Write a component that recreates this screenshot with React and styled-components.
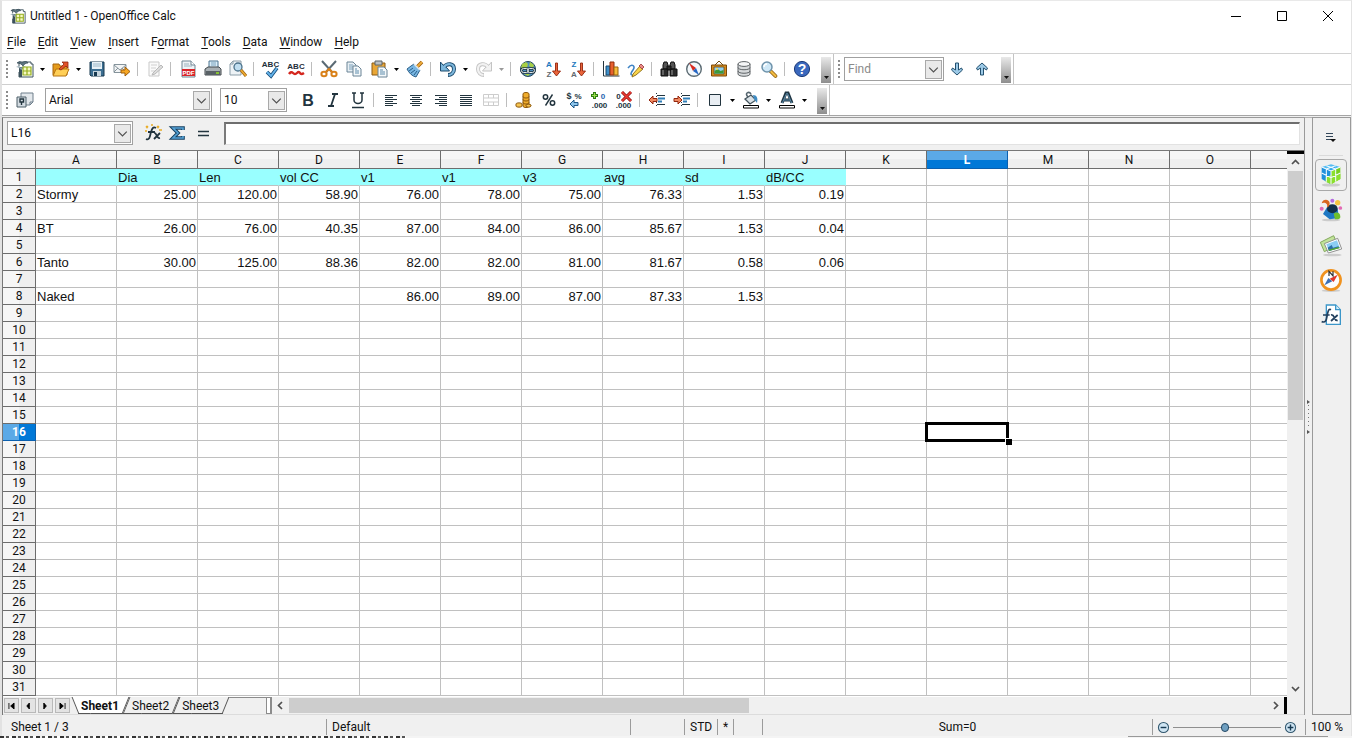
import React from "react";
import styled, { createGlobalStyle, css } from "styled-components";

const ui = `Roboto, "Open Sans", sans-serif`;
const cellFont = `"Liberation Sans", Arial, sans-serif`;

const Global = createGlobalStyle`
  * { box-sizing: border-box; }
  html, body { margin: 0; background: #fff; }
  body { font: 12px/16px ${ui}; color: #111; }
  button, input, select { font: inherit; color: inherit; margin: 0; padding: 0; border: 0; border-radius: 0; background: none; }
  svg { display: block; overflow: visible; }
`;

/* ---------- window frame ---------- */

const Desktop = styled.div`
  height: 100vh;
  min-height: 480px;
  display: flex;
  flex-direction: column;
  overflow: hidden;
`;
const Window = styled.div`
  flex: 1;
  min-height: 0;
  display: flex;
  flex-direction: column;
  border-top: 1px solid #e9e9e9;
  border-left: 2px solid #e2e2e2;
  border-right: 1px solid #e3e3e3;
`;
const Backdrop = styled.div`
  height: 2px;
  display: flex;
  justify-content: space-between;
  background: #f4f4f4;
`;
const BackdropText = styled.span`
  width: 30%;
  background: repeating-linear-gradient(90deg, #333 0 4px, #eee 4px 6px, #555 6px 9px, #fff 9px 12px);
`;
const BackdropEdge = styled.span`
  width: 200px;
  margin-right: 24px;
  border-top: 1px solid #999;
`;
const TitleBar = styled.header`
  height: 29px;
  display: flex;
  align-items: center;
  padding-left: 8px;
`;
const Title = styled.h1`
  flex: 1;
  margin: 0 0 0 4px;
  font-size: 12px;
  line-height: 16px;
  font-weight: 400;
`;
const WindowButton = styled.button`
  width: 46px;
  height: 28px;
  display: grid;
  place-items: center;
`;
const MenuBar = styled.nav`
  height: 24px;
  display: flex;
  align-items: center;
  gap: 12px;
  padding: 1px 0 0 5px;
  border-bottom: 1px solid #d2d2d2;
`;
const MenuItem = styled.button`
  line-height: 16px;
  u { text-underline-offset: 2px; }
`;

/* ---------- toolbars ---------- */

const ToolbarRow = styled.div`
  height: 31px;
  display: flex;
  border-bottom: 1px solid ${(p) => (p.$last ? "#a5a5a5" : "#cfcfcf")};
`;
const Toolbar = styled.div`
  display: flex;
  align-items: center;
  padding-right: 2px;
  border-right: 1px solid #c4c4c4;
`;
const Grip = styled.span`
  width: 3px;
  height: 18px;
  margin: 0 4px 0 3px;
  background: repeating-linear-gradient(#8c8c8c 0 2px, transparent 2px 4px) center / 2px 100% no-repeat;
`;
const ToolButton = styled.button`
  width: 25px;
  height: 25px;
  display: grid;
  place-items: center;
`;
const DropButton = styled.button`
  width: 11px;
  height: 25px;
  display: grid;
  place-items: center;
  color: ${(p) => (p.$off ? "#999" : "#000")};
`;
const Separator = styled.span`
  width: 2px;
  height: 14px;
  margin: 0 3px;
  border-left: 1px solid #bdbdbd;
`;
const MoreButton = styled.button`
  width: 10px;
  height: 26px;
  margin-left: 7px;
  align-self: flex-end;
  margin-bottom: 1px;
  display: grid;
  place-items: end center;
  && {
    padding-bottom: 4px;
    background: linear-gradient(#e9e9e9, #8e8e8e);
  }
`;
const FieldGroup = styled.div`
  display: flex;
  gap: 8px;
  margin: 0 8px;
`;
const Combo = styled.label`
  width: ${(p) => p.$w}px;
  height: 24px;
  display: flex;
  align-items: center;
  padding-right: 1px;
  border: 1px solid #a0a0a0;
  background: #fff;
  && select, && input {
    flex: 1;
    min-width: 0;
    height: 20px;
    padding-left: 3px;
    appearance: none;
    outline: 0;
  }
  input::placeholder { color: #8a8a8a; opacity: 1; }
`;
const ComboArrow = styled.span`
  width: 17px;
  height: 19px;
  display: grid;
  place-items: center;
  border: 1px solid #a9a9a9;
  background: #e9e9e9;
  pointer-events: none;
`;

/* ---------- main area ---------- */

const Main = styled.div`
  flex: 1;
  min-height: 0;
  display: flex;
  background: #f0f0f0;
  padding-top: 1px;
`;
const Document = styled.main`
  flex: 1;
  min-width: 0;
  display: flex;
  flex-direction: column;
  border: 1px solid #9a9a9a;
  border-left-color: #777;
  border-bottom: 0;
`;
const FormulaBar = styled.div`
  height: 33px;
  display: flex;
  align-items: center;
  padding: 0 4px 2px 4px;
  border-bottom: 1px solid #777;
`;
const FormulaButtons = styled.div`
  display: flex;
  padding: 0 9px 0 7px;
`;
const FormulaInput = styled.input`
  flex: 1;
  min-width: 0;
  height: 23px;
  && {
    padding: 0 4px;
    background: #fff;
    border: 1px solid #e2e2e2;
    border-top: 2px solid #6e6e6e;
    border-left: 2px solid #7a7a7a;
  }
`;
const SheetArea = styled.div`
  flex: 1;
  min-height: 0;
  display: flex;
`;
const GridViewport = styled.div`
  flex: 1;
  min-width: 0;
  overflow: hidden;
  background: #fff;
`;
const Grid = styled.table`
  width: 100%;
  table-layout: fixed;
  border-collapse: separate;
  border-spacing: 0;
`;
const RowHeadCol = styled.col` width: 33px; `;
const DataCol = styled.col` width: 81px; `;
const active = css`
  color: #fff;
  font-weight: 700;
  border-color: #0a5fae;
`;
const head = css`
  padding: 1px 0 0;
  font-weight: 400;
  font-size: 12px;
  line-height: 15px;
  text-align: center;
  border-right: 1px solid #6d6d6d;
  border-bottom: 1px solid #6d6d6d;
  overflow: hidden;
`;
const ColumnHead = styled.th`
  ${head}
  height: 18px;
  background: linear-gradient(#f6f6f6 0 50%, #efefef 50%);
  &:last-child { border-right: 0; }
  ${(p) => p.$on && css`${active} background: linear-gradient(#5ba9e6 0 52%, #0078d7 52%);`}
`;
const RowHead = styled.th`
  ${head}
  height: 17px;
  background: linear-gradient(90deg, #f6f6f6 0 50%, #efefef 50%);
  ${(p) => p.$on && css`${active} background: linear-gradient(90deg, #5ba9e6 0 50%, #0078d7 50%);`}
`;
const Cell = styled.td`
  height: 17px;
  padding: 1px 1px 0;
  position: relative;
  z-index: ${(p) => (p.$selected ? 1 : 0)};
  font: 13px/15px ${cellFont};
  white-space: nowrap;
  text-align: ${(p) => (p.$num ? "right" : "left")};
  border-right: 1px solid #c0c0c0;
  border-bottom: 1px solid #c0c0c0;
  &:last-child { border-right: 0; }
  ${(p) => p.$fill && css`background: #99ffff; border-right-color: #99ffff;`}
`;
const Cursor = styled.span`
  position: absolute;
  inset: -2px;
  border: 3px solid #000;
  &::after {
    content: "";
    position: absolute;
    right: -6px;
    bottom: -6px;
    width: 6px;
    height: 6px;
    background: #000;
    border-top: 1px solid #fff;
    border-left: 1px solid #fff;
  }
`;
const VScroll = styled.div`
  width: 17px;
  display: flex;
  flex-direction: column;
  align-items: center;
  border-top: 3px solid #000;
`;
const ScrollButton = styled.button`
  width: 17px;
  height: 17px;
  display: grid;
  place-items: center;
`;
const VTrack = styled.div`
  flex: 1;
  width: 15px;
`;
const VThumb = styled.div`
  height: 49%;
  background: #cdcdcd;
`;

/* ---------- sheet tabs ---------- */

const TabRow = styled.div`
  height: 18px;
  display: flex;
  border-bottom: 1px solid #dcdcdc;
`;
const TabNav = styled.div`
  display: flex;
  gap: 2px;
  padding: 1px 4px 0 1px;
  && button {
    width: 15px;
    height: 15px;
    display: grid;
    place-items: center;
    background: #e3e3e3;
    border: 1px solid #b9b9b9;
  }
`;
const Tabs = styled.div`
  width: 192px;
  display: flex;
  padding-left: 1px;
  border-top: 1px solid #8c8c8c;
`;
const Tab = styled.button`
  height: 16px;
  position: relative;
  z-index: ${(p) => (p.$on ? 1 : 0)};
  && { padding: 0 7px 0 6px; }
  line-height: 15px;
  font-weight: ${(p) => (p.$on ? 700 : 400)};
  &::before, &::after {
    content: "";
    position: absolute;
    z-index: -1;
    top: -1px;
    bottom: 0;
    width: 60%;
    border-bottom: 1px solid #555;
    background: ${(p) => (p.$on ? "#fff" : "#f0f0f0")};
  }
  &::before { left: 0; border-left: 1px solid #555; transform: skewX(${(p) => (p.$first ? 22 : -22)}deg); }
  &::after { right: 0; border-right: 1px solid #555; transform: skewX(-22deg); }
`;
const TabSplit = styled.span`
  width: 6px;
  border: 1px solid #8c8c8c;
  border-right-width: 2px;
  background: #fff;
`;
const HTrack = styled.div`
  flex: 1;
  padding: 1px 0;
`;
const HThumb = styled.div`
  width: 47%;
  height: 15px;
  background: #cdcdcd;
`;
const TabEnd = styled.span`
  width: 3px;
  margin-right: 17px;
  background: #000;
`;

/* ---------- sidebar ---------- */

const Splitter = styled.div`
  width: 7px;
  display: grid;
  place-items: center;
  border-top: 1px solid #b0b0b0;
`;
const SideBar = styled.aside`
  width: 39px;
  display: flex;
  flex-direction: column;
  align-items: center;
  gap: 3px;
  padding: 1px 1px 0 0;
  border: 1px solid #9a9a9a;
`;
const SideMenu = styled.button`
  width: 24px;
  height: 37px;
  display: grid;
  place-items: center;
  && { border-bottom: 1px solid #dadada; }
`;
const SideButton = styled.button`
  width: 32px;
  height: 32px;
  display: grid;
  place-items: center;
  && {
    border: 1px solid ${(p) => (p.$on ? "#a8a8a8" : "transparent")};
    border-radius: 4px;
  }
`;

/* ---------- status bar ---------- */

const StatusBar = styled.footer`
  height: 21px;
  display: flex;
  align-items: center;
  padding-top: 3px;
  background: #f0f0f0;
`;
const Status = styled.span`
  height: 16px;
  width: ${(p) => p.$w}px;
  padding: 0 5px;
  border-left: ${(p) => (p.$plain ? "0" : "1px solid #9b9b9b")};
  padding-left: ${(p) => (p.$plain ? 9 : 5)}px;
  white-space: nowrap;
`;
const SumStatus = styled(Status)`
  flex: 1;
  text-align: center;
`;
const ZoomStatus = styled.div`
  width: 153px;
  height: 16px;
  display: flex;
  align-items: center;
  justify-content: space-between;
  padding: 0 8px 0 4px;
  border-left: 1px solid #9b9b9b;
`;
const ZoomSlider = styled.input`
  width: 108px;
  height: 14px;
  appearance: none;
  && { background: linear-gradient(#8f8f8f, #8f8f8f) center / 100% 1px no-repeat; }
  &::-webkit-slider-thumb {
    appearance: none;
    width: 8px;
    height: 9px;
    border: 1px solid #234864;
    border-radius: 4px;
    background: #6f9fc0;
  }
`;

/* ---------- icons, drawn on an 18 unit square ---------- */

const Svg = ({ children, size = 18 }) => (
  <svg width={size} height={size} viewBox="0 0 18 18" fill="none" aria-hidden="true">{children}</svg>
);
const bold = { fontFamily: "Liberation Sans, sans-serif", fontWeight: 700 };

const icons = {
  calc: (
    <>
      <path d="M3 6V2h12v2h2v13H3v-5" fill="#fff" stroke="#3d525c" />
      <path d="M3 7v10h3V7z" fill="#3d525c" />
      <path d="M1 3c2-2 4-1 5 0 2-2 5-2 6 0-2 0-4 1-5 3C6 4 3 3 1 3z" fill="#5e7682" stroke="#2e424d" strokeWidth=".7" />
      <path d="M0 7c2-1 4-1 5 1 1-2 3-2 5-1-2 1-3 2-5 3-1-2-3-3-5-3z" fill="#8ba0aa" />
      <path d="M7 7h8v8H7z" fill="#f6f9c2" stroke="#94ad1c" strokeWidth="1.200" />
      <path d="M11 7v8M7 11h8" stroke="#94ad1c" strokeWidth="1.200" />
    </>
  ),
  open: (
    <>
      <path d="M1 4h6l1 2h7v9H1z" fill="#e59b1c" stroke="#a6660e" />
      <path d="M1 16l3-7h13l-3 7z" fill="#ffcf57" stroke="#b67512" />
      <path d="M7 9l5-5-2-2h6v6l-2-2-5 4z" fill="#e2532a" stroke="#8e2713" strokeWidth=".8" />
    </>
  ),
  save: (
    <>
      <path d="M2 2h14v14H3l-1-1z" fill="#3c6f92" stroke="#16384f" />
      <path d="M4 2h10v7H4z" fill="#e8f1f6" />
      <path d="M5 4h8M5 6h8" stroke="#9cb8c8" />
      <path d="M5 11h8v5H5z" fill="#c5d4dd" />
      <path d="M6 12h3v4H6z" fill="#16384f" />
    </>
  ),
  mail: (
    <>
      <path d="M1 4.500h12v8H1z" fill="#f3f5f6" stroke="#85939b" />
      <path d="M1 5l6 5 6-5M1 12l4-4M13 12l-4-4" stroke="#85939b" />
      <path d="M8 10h4V7l5 4.500-5 4.500v-3H8z" fill="#f6a623" stroke="#9d5c0a" />
    </>
  ),
  edit: (
    <>
      <path d="M3 2h10v14H3z" fill="#fafafa" stroke="#c9c9c9" />
      <path d="M5 5h6M5 8h5M5 11h4" stroke="#d0d0d0" />
      <path d="M7 13l8-8 2 2-8 7-3 1z" fill="#ddd" stroke="#b9b9b9" />
    </>
  ),
  pdf: (
    <>
      <path d="M3 1h9l4 4v12H3z" fill="#eef3f6" stroke="#6f8593" />
      <path d="M12 1v4h4" fill="#fff" stroke="#6f8593" />
      <path d="M5 4h5M5 6h8" stroke="#9db2be" />
      <path d="M3 9h13v7H3z" fill="#d9252a" />
      <text x="9.500" y="15" textAnchor="middle" fontSize="6" fill="#fff" style={bold}>PDF</text>
    </>
  ),
  print: (
    <>
      <path d="M5 1h9v8H5z" fill="#d9ecf8" stroke="#4d7590" />
      <path d="M7 3h5M7 5h5" stroke="#7da4bd" />
      <path d="M1 9l3-2h11l2 2v6H1z" fill="#a9b0b4" stroke="#42494d" />
      <path d="M2 11h14v4H2z" fill="#596166" />
      <path d="M12 12h3v2h-3z" fill="#86c232" />
    </>
  ),
  preview: (
    <>
      <path d="M4 1h8v14H1V4z" fill="#eef3f6" stroke="#8b9da8" />
      <path d="M1 4h3V1" stroke="#8b9da8" />
      <circle cx="9" cy="7" r="4" fill="#c0def0" stroke="#4b718a" strokeWidth="1.300" />
      <path d="M12 10l5 6" stroke="#9a5f0c" strokeWidth="3" />
      <path d="M12 10l5 6" stroke="#edaa30" strokeWidth="1.700" />
    </>
  ),
  spell: (
    <>
      <text x="8.500" y="7" textAnchor="middle" fontSize="8" fill="#1f2f3a" style={bold}>ABC</text>
      <path d="M5 12l4 4 6-8" stroke="#174d7a" strokeWidth="3.600" />
      <path d="M5 12l4 4 6-8" stroke="#64b3ea" strokeWidth="1.900" />
    </>
  ),
  autospell: (
    <>
      <text x="9" y="9" textAnchor="middle" fontSize="8" fill="#1f2f3a" style={bold}>ABC</text>
      <path d="M2 14q2-3 4-1t4 0 3 0 4 0" stroke="#d4261e" strokeWidth="2.400" />
    </>
  ),
  cut: (
    <>
      <path d="M2 1l10 11M16 1L6 12" stroke="#5a6a74" strokeWidth="2" />
      <ellipse cx="4" cy="14" rx="2.600" ry="2.200" stroke="#d9811a" strokeWidth="2" />
      <ellipse cx="14" cy="14" rx="2.600" ry="2.200" stroke="#d9811a" strokeWidth="2" />
      <path d="M6 12l3-3 3 3" stroke="#d9811a" strokeWidth="2" />
    </>
  ),
  copy: (
    <>
      <path d="M2 2h6l3 3v7H2z" fill="#e8f0f5" stroke="#6b8496" />
      <path d="M4 5h4M4 7h5M4 9h4" stroke="#7ba0ba" />
      <path d="M8 6h5l3 3v7H8z" fill="#f4f8fa" stroke="#6b8496" />
      <path d="M10 9h2M10 11h4M10 13h4" stroke="#5c8bab" />
    </>
  ),
  paste: (
    <>
      <path d="M2 3h13v12H2z" fill="#e9a635" stroke="#8a5a14" />
      <path d="M5 1h7v4H5z" fill="#b9bfc3" stroke="#5c6468" />
      <path d="M8 7h6l3 3v7H8z" fill="#f4f8fa" stroke="#6b8496" />
      <path d="M10 10h3M10 12h5M10 14h5" stroke="#5c8bab" />
    </>
  ),
  brush: (
    <>
      <path d="M11 7l5-5" stroke="#9a5c12" strokeWidth="3.600" />
      <path d="M11 7l5-5" stroke="#f0ae3a" strokeWidth="2" />
      <path d="M5 6l3-2 6 6-4 7c-4-1-7-4-9-8z" fill="#78b6e2" stroke="#2a5f89" />
      <path d="M8 4l6 6" stroke="#dfe8ee" strokeWidth="1.500" />
      <path d="M3 11l4-3M5 13l4-3M8 15l3-4" stroke="#2a5f89" />
    </>
  ),
  undo: (
    <>
      <path d="M5 7C8 3 15 3 15 9c0 4-3 6-6 6" stroke="#1c4a6c" strokeWidth="4" />
      <path d="M1.500 2v9h9L8 8 4 5z" fill="#7db7dc" stroke="#1c4a6c" />
      <path d="M5 7C8 3 15 3 15 9c0 4-3 6-5.500 6" stroke="#7db7dc" strokeWidth="2.200" />
    </>
  ),
  redo: (
    <>
      <path d="M13 7C10 3 3 3 3 9c0 4 3 6 6 6" stroke="#c4c4c4" strokeWidth="4" />
      <path d="M16.500 2v9h-9L10 8l4-3z" fill="#f2f2f2" stroke="#c4c4c4" />
      <path d="M13 7C10 3 3 3 3 9c0 4 3 6 5.500 6" stroke="#f2f2f2" strokeWidth="2.200" />
    </>
  ),
  link: (
    <>
      <circle cx="9" cy="9" r="7.500" fill="#4f8dbd" stroke="#26485f" />
      <path d="M3 4l4-2 2 2-1 4H2zM11 2l4 3-1 3-4-2zM5 14h6l-2 2z" fill="#a8cf45" />
      <rect x="2.500" y="8.500" width="7" height="4" rx="2" stroke="#22343e" strokeWidth="2.400" />
      <rect x="8.500" y="8.500" width="7" height="4" rx="2" stroke="#22343e" strokeWidth="2.400" />
      <rect x="2.500" y="8.500" width="7" height="4" rx="2" stroke="#e1e8eb" />
      <rect x="8.500" y="8.500" width="7" height="4" rx="2" stroke="#e1e8eb" />
    </>
  ),
  sortUp: (
    <>
      <text x="5" y="7" textAnchor="middle" fontSize="8" fill="#2178bd" style={bold}>A</text>
      <text x="5" y="17" textAnchor="middle" fontSize="8" fill="#5f6a70" style={bold}>Z</text>
      <path d="M11.500 3h2v8h3l-4 5-4-5h3z" fill="#e9653b" stroke="#93260e" strokeWidth=".9" />
    </>
  ),
  sortDown: (
    <>
      <text x="5" y="7" textAnchor="middle" fontSize="8" fill="#2178bd" style={bold}>Z</text>
      <text x="5" y="17" textAnchor="middle" fontSize="8" fill="#5f6a70" style={bold}>A</text>
      <path d="M11.500 3h2v8h3l-4 5-4-5h3z" fill="#e9653b" stroke="#93260e" strokeWidth=".9" />
    </>
  ),
  chart: (
    <>
      <path d="M1.500 1v15h16" stroke="#26343c" />
      <path d="M4 6h4v9H4z" fill="#3d8fc9" stroke="#174a70" />
      <path d="M8 2h4v13H8z" fill="#e8612f" stroke="#8d2c0d" />
      <path d="M12 7h4v8h-4z" fill="#f6bc3a" stroke="#99650c" />
    </>
  ),
  draw: (
    <>
      <path d="M1 8c4-5 8-2 5 2s-3 6 2 5" stroke="#3e83c4" strokeWidth="1.600" />
      <path d="M6 14l7-8 3 3-7 6-4 2z" fill="#f8d44b" stroke="#8b6a12" strokeWidth=".9" />
      <path d="M12 6l2-2 3 3-2 2z" fill="#e98a8a" stroke="#a04444" strokeWidth=".9" />
    </>
  ),
  binoculars: (
    <>
      <path d="M3 5l1-3h3l1 3v4H3zM10 5l1-3h3l1 3v4h-5z" fill="#555" stroke="#111" />
      <path d="M1 9h7v7H1zM10 9h7v7h-7zM7 6h4v4H7z" fill="#2b2b2b" stroke="#111" />
      <path d="M3 10v5M12 10v5" stroke="#999" />
    </>
  ),
  compass: (
    <>
      <circle cx="9" cy="9" r="7.300" fill="#f3f8fb" stroke="#5b6a72" strokeWidth="1.400" />
      <path d="M4 3l7 5-3 3z" fill="#d92b20" />
      <path d="M14 15l-6-4 3-3z" fill="#2566c4" />
    </>
  ),
  gallery: (
    <>
      <path d="M5 5l4-4 4 4" stroke="#6d4b12" />
      <path d="M1.500 5h15v11h-15z" fill="#d58b1e" stroke="#7c4a08" />
      <path d="M4 7h10v7H4z" fill="#8fd0f2" stroke="#6b4a14" strokeWidth=".8" />
      <path d="M4.500 13.500V11l3-2 3 2 3-1v3.500z" fill="#3d9a38" />
      <circle cx="7" cy="9" r="1" fill="#ffe14d" />
    </>
  ),
  database: (
    <>
      <path d="M3 4v10c0 3 12 3 12 0V4z" fill="#d7dadc" stroke="#5e6366" />
      <path d="M3 7.500c0 3 12 3 12 0M3 11c0 3 12 3 12 0" stroke="#5e6366" />
      <ellipse cx="9" cy="4" rx="6" ry="2.400" fill="#f5f6f7" stroke="#5e6366" />
    </>
  ),
  zoom: (
    <>
      <path d="M10.500 11l5 5" stroke="#8e5d0c" strokeWidth="3.800" strokeLinecap="round" />
      <path d="M11 11.500l4.500 4.500" stroke="#f1bb42" strokeWidth="2.200" strokeLinecap="round" />
      <circle cx="7" cy="7" r="5" fill="#cfe8f7" stroke="#6f93ab" strokeWidth="1.500" />
      <path d="M4 7a3 3 0 013-3" stroke="#fff" strokeWidth="1.400" />
    </>
  ),
  help: (
    <>
      <circle cx="9" cy="9" r="7.600" fill="#3a68bd" stroke="#1b3a78" />
      <text x="9" y="14" textAnchor="middle" fontSize="14" fill="#fff" style={bold}>?</text>
    </>
  ),
  down: <path d="M7.500 3h3v7l3-2 1 2-5.500 5L3.500 10l1-2 3 2z" fill="#9cc9e6" stroke="#23506f" />,
  up: <path d="M7.500 15h3V8l3 2 1-2L9 3 3.500 8l1 2 3-2z" fill="#9cc9e6" stroke="#23506f" />,
  styles: (
    <>
      <path d="M5 2h12v9l-3 3H5z" fill="#e3e8ec" stroke="#6e7f8b" />
      <path d="M17 11h-3v3" stroke="#6e7f8b" />
      <path d="M1 6h9v10H1z" fill="#d3dbe1" stroke="#4d5e69" />
      <path d="M4 8h3.500v3H4zM5.500 11v3" stroke="#22343e" strokeWidth="1.400" />
    </>
  ),
  bold: <text x="9" y="15" textAnchor="middle" fontSize="16" fill="#22343e" style={bold}>B</text>,
  italic: <path d="M8 3h6M4 15h6M11 3L7 15" stroke="#22343e" strokeWidth="1.800" />,
  underline: <path d="M5 2v7a4 3.500 0 008 0V2M3 2h4M11 2h4M3 16.500h12" stroke="#22343e" strokeWidth="1.500" />,
  alignLeft: <path d="M3 4.500h12M3 6.500h8M3 8.500h12M3 10.500h8M3 12.500h12M3 14.500h8" stroke="#22343e" />,
  alignCenter: <path d="M3 4.500h12M5 6.500h8M3 8.500h12M5 10.500h8M3 12.500h12M5 14.500h8" stroke="#22343e" />,
  alignRight: <path d="M3 4.500h12M7 6.500h8M3 8.500h12M7 10.500h8M3 12.500h12M7 14.500h8" stroke="#22343e" />,
  justify: <path d="M3 4.500h12M3 6.500h12M3 8.500h12M3 10.500h12M3 12.500h12M3 14.500h12" stroke="#22343e" />,
  merge: <path d="M1.500 3.500h15v11h-15zM1.500 7h15M1.500 11h15M6.500 3.500V7M11.500 3.500V7M6.500 11v3.500M11.500 11v3.500" stroke="#cdcdcd" />,
  coins: (
    <>
      <path d="M8 3c0-2 6-2 6 0v12c0 2-6 2-6 0z" fill="#f0ad2d" stroke="#8c570b" />
      <path d="M8 5.500c0 2 6 2 6 0M8 8.500c0 2 6 2 6 0M8 11.500c0 2 6 2 6 0" stroke="#8c570b" />
      <path d="M1 13c0-1.500 6-1.500 6 0v2c0 1.500-6 1.500-6 0z" fill="#f6c552" stroke="#8c570b" />
      <path d="M11 14c0-1 5-1 5 0v1c0 1.500-5 1.500-5 0z" fill="#f6c552" stroke="#8c570b" />
    </>
  ),
  percent: (
    <>
      <circle cx="5.500" cy="6" r="2.200" stroke="#22343e" strokeWidth="1.500" />
      <circle cx="12.500" cy="12" r="2.200" stroke="#22343e" strokeWidth="1.500" />
      <path d="M12.500 3.500l-7 11" stroke="#22343e" strokeWidth="1.400" />
    </>
  ),
  standard: (
    <>
      <text x="4" y="8" textAnchor="middle" fontSize="9" fill="#22343e" style={bold}>$</text>
      <text x="13" y="8" textAnchor="middle" fontSize="8" fill="#22343e" style={bold}>%</text>
      <path d="M5 13l4-4v2.500h4v3H9V17z" fill="#8cc4ea" stroke="#1d5686" />
    </>
  ),
  addDecimal: (
    <>
      <path d="M4.500 1v7M1 4.500h7" stroke="#2f7d12" strokeWidth="3" />
      <path d="M4.500 2v5M2 4.500h5" stroke="#9be04e" strokeWidth="1.200" />
      <text x="13" y="8" textAnchor="middle" fontSize="8" fill="#2a63b0" style={bold}>0</text>
      <text x="9.500" y="17" textAnchor="middle" fontSize="8" fill="#22343e" style={bold}>.000</text>
    </>
  ),
  deleteDecimal: (
    <>
      <text x="3.500" y="8" textAnchor="middle" fontSize="8" fill="#22343e" style={bold}>0</text>
      <text x="8.500" y="17" textAnchor="middle" fontSize="8" fill="#22343e" style={bold}>.000</text>
      <path d="M7 1l9 9M16 1l-9 9" stroke="#8e1010" strokeWidth="3" />
      <path d="M7 1l9 9M16 1l-9 9" stroke="#ec3c34" strokeWidth="1.600" />
    </>
  ),
  outdent: (
    <>
      <path d="M9 4.500h8M9 13.500h8" stroke="#22343e" />
      <path d="M10 7.500h7M10 10.500h4" stroke="#3280b9" strokeWidth="2" />
      <path d="M8.500 2v14" stroke="#22343e" strokeDasharray="1 2" />
      <path d="M1 9l4-4v2.500h4v3H5V13z" fill="#f08a62" stroke="#93260e" />
    </>
  ),
  indent: (
    <>
      <path d="M9 4.500h8M9 13.500h8" stroke="#22343e" />
      <path d="M10 7.500h7M10 10.500h4" stroke="#3280b9" strokeWidth="2" />
      <path d="M8.500 2v14" stroke="#22343e" strokeDasharray="1 2" />
      <path d="M9 9L5 5v2.500H1v3h4V13z" fill="#f08a62" stroke="#93260e" />
    </>
  ),
  borders: <path d="M3.500 3.500h11v11h-11z" fill="#e9eef3" stroke="#22343e" />,
  fill: (
    <>
      <path d="M6 6c-4-4 1-6 3-3" stroke="#56666f" strokeWidth="1.600" />
      <path d="M3 8l6-4 5 5-6 4z" fill="#d9e1e6" stroke="#43535c" strokeWidth="1.300" />
      <path d="M11 4c4 0 5 3 4 8l-3-4z" fill="#3f8cc3" />
      <path d="M1.500 14.500h15v2.500h-15z" fill="#fff" stroke="#000" />
    </>
  ),
  fontColor: (
    <>
      <path d="M4 12L8 2h2l4 10M6 9h6" stroke="#1f3543" strokeWidth="3" />
      <path d="M4.300 12L8.500 2.500h1L13.700 12M6 9h6" stroke="#5c8cab" />
      <path d="M1.500 14.500h15v2.500h-15z" fill="#fff" stroke="#000" />
    </>
  ),
  wizard: (
    <>
      <path d="M12 4c-3-2-4 1-5 4s-1 9-5 7M4 8h7M10 9c3-1 2 6 6 5M16 9l-6 6" stroke="#22343e" strokeWidth="1.800" />
      <path d="M2 2l2 2M4 2L2 4M13 2l2 2M15 2l-2 2M15 6h3M7 1h2M1 7h2" stroke="#e9ac25" strokeWidth="1.400" />
    </>
  ),
  sum: (
    <>
      <path d="M14 6V4H4l5 5-5 5h10v-2" stroke="#153f60" strokeWidth="3.600" />
      <path d="M14 6V4H4l5 5-5 5h10v-2" stroke="#55a3d6" strokeWidth="1.600" />
    </>
  ),
  equals: <path d="M4 7.500h11M4 11.500h11" stroke="#22343e" strokeWidth="1.600" />,
};

const sideIcons = {
  Properties: (
    <>
      <ellipse cx="9" cy="16.500" rx="7" ry="1.200" fill="#ccc" />
      <path d="M9 1l7 2-7 3-7-3z" fill="#55bdf2" />
      <path d="M9 6l7-3v9l-7 4z" fill="#78cf1f" />
      <path d="M2 3l7 3v10l-7-4z" fill="#1f90dc" />
      <path d="M9 6l3-1v5l4-2v4l-7 4-4-2v-3l4-2z" fill="#8be02c" />
      <path d="M12 1.800v3L9 6 5 4.500l7-2.500z" fill="#2fa6ea" />
      <path d="M9 6v10M5.500 4.500v9.500M12.500 4.500v9.500M2 7.500l7 3.500 7-3.500M2 3l7 3 7-3M5.500 2l7 2.500M12.500 2l-7 2.500" stroke="#f4fbff" strokeWidth=".8" />
    </>
  ),
  Styles: (
    <>
      <ellipse cx="9" cy="16.500" rx="7" ry="1" fill="#ccc" />
      <path d="M6 7l-3 5 5 4 7-1-1-7z" fill="#1f78c4" />
      <ellipse cx="10" cy="8" rx="4" ry="3.400" fill="#12304a" />
      <path d="M2 4c1-4 6-3 6 0 0 2-1 3-2 3 1-3-2-4-4-3z" fill="#d9661f" />
      <path d="M11 12c2-2 5-1 5 2 0 2-2 2-4 2z" fill="#6fbf2a" />
      <circle cx="14" cy="3.500" r="2" fill="#f5c542" />
      <circle cx="10" cy="2" r="1.500" fill="#b36be0" />
      <circle cx="2" cy="8" r="1.500" fill="#e36ab4" />
      <circle cx="16" cy="7.500" r="1.400" fill="#e36ab4" />
    </>
  ),
  Gallery: (
    <>
      <ellipse cx="10" cy="16.500" rx="7" ry="1" fill="#ccc" />
      <path d="M1 7l10-5 3 7L4 14z" fill="#c2e39a" stroke="#7da457" strokeWidth=".7" />
      <path d="M4 8l10-4 3 8-10 3z" fill="#fff" stroke="#8a8a8a" strokeWidth=".7" />
      <path d="M5.500 8.500l8-3 2 5.500-8 2.500z" fill="#8ccdf3" />
      <path d="M6.500 11l3-2 1 2 4-1 1 1-8 2.500z" fill="#2d6fa8" />
      <path d="M7 12.500l8-2 .5 1-8 2z" fill="#5aa832" />
    </>
  ),
  Navigator: (
    <>
      <ellipse cx="9" cy="17" rx="7" ry="1" fill="#ccc" />
      <circle cx="9" cy="9" r="7.200" fill="#fdfdfd" stroke="#f0921e" strokeWidth="2" />
      <path d="M14 5l-3 5.500L8 8z" fill="#e2372b" />
      <path d="M4 13l3-5.500L10 10z" fill="#3a6fb5" />
      <path d="M7.500 6V2.500l3 3.500V2.500" stroke="#333" strokeWidth=".9" />
    </>
  ),
  Functions: (
    <>
      <path d="M5.500 1.500h7l3.500 3.500v11H5.500z" fill="#fff" stroke="#3b96c9" />
      <path d="M12.500 1.500V5H16" fill="#d8eefa" stroke="#3b96c9" />
      <path d="M9 5C7 4 6.500 7 6 10s-1 5-4 4M3 9h5M9 9c3-1 2 5 5 4M14 9l-5 4.500" stroke="#23415f" strokeWidth="1.300" />
    </>
  ),
};

const Triangle = () => <svg width="5" height="3" viewBox="0 0 5 3"><path d="M0 0h5L2.500 3z" fill="currentColor" /></svg>;
const Chevron = ({ turn = 0, size = 9 }) => (
  <svg width={size} height={size} viewBox="0 0 9 9"><path d="M1 3l3.500 3.500L8 3" transform={`rotate(${turn} 4.500 4.500)`} fill="none" stroke="#505050" strokeWidth={size > 9 ? 1 : 1.700} /></svg>
);

/* ---------- data ---------- */

const menus = [["", "F", "ile"], ["", "E", "dit"], ["", "V", "iew"], ["", "I", "nsert"], ["F", "o", "rmat"], ["", "T", "ools"], ["", "D", "ata"], ["", "W", "indow"], ["", "H", "elp"]];

const standardTools = [
  ["calc", "New"], "v", ["open", "Open"], "v", ["save", "Save"], ["mail", "E-mail"], "|",
  ["edit", "Edit file"], "|", ["pdf", "Export as PDF"], ["print", "Print"], ["preview", "Page preview"], "|",
  ["spell", "Spellcheck"], ["autospell", "AutoSpellcheck"], "|", ["cut", "Cut"], ["copy", "Copy"], ["paste", "Paste"], "v",
  ["brush", "Format paintbrush"], "|", ["undo", "Undo"], "v", ["redo", "Redo"], "x", "|",
  ["link", "Hyperlink"], ["sortUp", "Sort ascending"], ["sortDown", "Sort descending"], "|",
  ["chart", "Chart"], ["draw", "Show draw functions"], "|", ["binoculars", "Find & replace"], ["compass", "Navigator"],
  ["gallery", "Gallery"], ["database", "Data sources"], ["zoom", "Zoom"], "|", ["help", "Help"],
];
const formatTools = [
  ["bold", "Bold"], ["italic", "Italic"], ["underline", "Underline"], "|",
  ["alignLeft", "Align left"], ["alignCenter", "Center"], ["alignRight", "Align right"], ["justify", "Justified"], ["merge", "Merge cells"], "|",
  ["coins", "Currency"], ["percent", "Percent"], ["standard", "Standard format"], ["addDecimal", "Add decimal place"], ["deleteDecimal", "Delete decimal place"], "|",
  ["outdent", "Decrease indent"], ["indent", "Increase indent"], "|",
  ["borders", "Borders"], "v", ["fill", "Background color"], "v", ["fontColor", "Font color"], "v",
];

const columns = "ABCDEFGHIJKLMNO".split("");
const rows = Array.from({ length: 31 }, (_, i) => i + 1);
const data = {
  1: ["", "Dia", "Len", "vol CC", "v1", "v1", "v3", "avg", "sd", "dB/CC"],
  2: ["Stormy", "25.00", "120.00", "58.90", "76.00", "78.00", "75.00", "76.33", "1.53", "0.19"],
  4: ["BT", "26.00", "76.00", "40.35", "87.00", "84.00", "86.00", "85.67", "1.53", "0.04"],
  6: ["Tanto", "30.00", "125.00", "88.36", "82.00", "82.00", "81.00", "81.67", "0.58", "0.06"],
  8: ["Naked", "", "", "", "86.00", "89.00", "87.00", "87.33", "1.53"],
};

const Tools = ({ items }) =>
  items.map((t, i) => {
    if (t === "|") return <Separator key={i} />;
    if (t === "v" || t === "x")
      return <DropButton key={i} $off={t === "x"} aria-label="More options"><Triangle /></DropButton>;
    return <ToolButton key={i} aria-label={t[1]}><Svg>{icons[t[0]]}</Svg></ToolButton>;
  });

const Dropdown = ({ label, value, width }) => (
  <Combo $w={width}>
    <select aria-label={label} defaultValue={value}><option>{value}</option></select>
    <ComboArrow><Chevron size={11} /></ComboArrow>
  </Combo>
);

const navShapes = [
  ["First sheet", "M1 0v7M7 0L3 3.500 7 7z"],
  ["Previous sheet", "M5 0L2 3.500 5 7z"],
  ["Next sheet", "M2 0l3 3.500L2 7z"],
  ["Last sheet", "M7 0v7M1 0l4 3.500L1 7z"],
];

export default function App() {
  return (
    <Desktop>
      <Global />
      <Window>
        <TitleBar>
          <Svg size={16}>{icons.calc}</Svg>
          <Title>Untitled 1 - OpenOffice Calc</Title>
          <WindowButton aria-label="Minimize"><svg width="10" height="10"><path d="M0 5.500h10" stroke="#000" /></svg></WindowButton>
          <WindowButton aria-label="Maximize"><svg width="10" height="10"><path d="M.5.5h9v9h-9z" fill="none" stroke="#000" /></svg></WindowButton>
          <WindowButton aria-label="Close"><svg width="10" height="10"><path d="M0 0l10 10M10 0L0 10" stroke="#000" /></svg></WindowButton>
        </TitleBar>
        <MenuBar>
          {menus.map(([before, key, after]) => (
            <MenuItem key={key + after}>{before}<u>{key}</u>{after}</MenuItem>
          ))}
        </MenuBar>

        <ToolbarRow>
          <Toolbar>
            <Grip />
            <Tools items={standardTools} />
            <MoreButton aria-label="Toolbar options"><Triangle /></MoreButton>
          </Toolbar>
          <Toolbar>
            <Grip />
            <Combo $w={100}>
              <input aria-label="Find" placeholder="Find" />
              <ComboArrow><Chevron size={11} /></ComboArrow>
            </Combo>
            <Tools items={[["down", "Find next"], ["up", "Find previous"]]} />
            <MoreButton aria-label="Toolbar options"><Triangle /></MoreButton>
          </Toolbar>
        </ToolbarRow>
        <ToolbarRow $last>
          <Toolbar>
            <Grip />
            <Tools items={[["styles", "Styles and formatting"]]} />
            <FieldGroup>
              <Dropdown label="Font name" value="Arial" width={167} />
              <Dropdown label="Font size" value="10" width={67} />
            </FieldGroup>
            <Tools items={formatTools} />
            <MoreButton aria-label="Toolbar options"><Triangle /></MoreButton>
          </Toolbar>
        </ToolbarRow>

        <Main>
          <Document>
            <FormulaBar>
              <Dropdown label="Name box" value="L16" width={126} />
              <FormulaButtons>
                <Tools items={[["wizard", "Function wizard"], ["sum", "Sum"], ["equals", "Function"]]} />
              </FormulaButtons>
              <FormulaInput aria-label="Input line" />
            </FormulaBar>
            <SheetArea>
              <GridViewport>
                <Grid>
                  <colgroup>
                    <RowHeadCol />
                    {columns.map((c) => <DataCol key={c} />)}
                    <col />
                  </colgroup>
                  <thead>
                    <tr>
                      <ColumnHead />
                      {columns.map((c) => <ColumnHead key={c} scope="col" $on={c === "L"}>{c}</ColumnHead>)}
                      <ColumnHead />
                    </tr>
                  </thead>
                  <tbody>
                    {rows.map((r) => (
                      <tr key={r}>
                        <RowHead scope="row" $on={r === 16}>{r}</RowHead>
                        {columns.map((c, i) => {
                          const selected = r === 16 && c === "L";
                          return (
                            <Cell key={c} $num={r > 1 && i > 0} $fill={r === 1 && i < 10} $selected={selected}>
                              {data[r]?.[i]}
                              {selected && <Cursor />}
                            </Cell>
                          );
                        })}
                        <Cell />
                      </tr>
                    ))}
                  </tbody>
                </Grid>
              </GridViewport>
              <VScroll>
                <ScrollButton aria-label="Scroll up"><Chevron turn={180} /></ScrollButton>
                <VTrack><VThumb /></VTrack>
                <ScrollButton aria-label="Scroll down"><Chevron /></ScrollButton>
              </VScroll>
            </SheetArea>
            <TabRow>
              <TabNav>
                {navShapes.map(([label, d]) => (
                  <button key={label} aria-label={label}>
                    <svg width="7" height="6" viewBox="0 0 8 7"><path d={d} fill="#000" stroke="#000" /></svg>
                  </button>
                ))}
              </TabNav>
              <Tabs>
                <Tab $on $first>Sheet1</Tab>
                <Tab>Sheet2</Tab>
                <Tab>Sheet3</Tab>
              </Tabs>
              <TabSplit />
              <ScrollButton aria-label="Scroll left"><Chevron turn={90} /></ScrollButton>
              <HTrack><HThumb /></HTrack>
              <ScrollButton aria-label="Scroll right"><Chevron turn={270} /></ScrollButton>
              <TabEnd />
            </TabRow>
          </Document>
          <Splitter>
            <svg width="5" height="34"><path d="M2.500 5v24" stroke="#777" strokeDasharray="1 3" /><path d="M1 0l3 2-3 2zM1 30l3 2-3 2z" fill="#555" /></svg>
          </Splitter>
          <SideBar>
            <SideMenu aria-label="Sidebar settings">
              <svg width="10" height="10"><path d="M0 1.500h7M0 4.500h7M0 7.500h5" stroke="#33475a" /><path d="M4 7h6L7 10z" fill="#111" /></svg>
            </SideMenu>
            {Object.entries(sideIcons).map(([name, art]) => (
              <SideButton key={name} aria-label={name} $on={name === "Properties"}><Svg size={24}>{art}</Svg></SideButton>
            ))}
          </SideBar>
        </Main>

        <StatusBar>
          <Status $plain $w={324}>Sheet 1 / 3</Status>
          <Status $w={304}>Default</Status>
          <Status $w={54} />
          <Status $w={33}>STD</Status>
          <Status $w={16}>*</Status>
          <Status $w={29} />
          <SumStatus>Sum=0</SumStatus>
          <ZoomStatus>
            <Svg size={13}><circle cx="9" cy="9" r="7" fill="#cfe5f3" stroke="#32586f" strokeWidth="1.500" /><path d="M5 9h8" stroke="#173a52" strokeWidth="2" /></Svg>
            <ZoomSlider type="range" aria-label="Zoom" defaultValue={48} />
            <Svg size={13}><circle cx="9" cy="9" r="7" fill="#cfe5f3" stroke="#32586f" strokeWidth="1.500" /><path d="M5 9h8M9 5v8" stroke="#173a52" strokeWidth="2" /></Svg>
          </ZoomStatus>
          <Status $w={46}>100 %</Status>
        </StatusBar>
      </Window>
      <Backdrop><BackdropText /><BackdropEdge /></Backdrop>
    </Desktop>
  );
}
